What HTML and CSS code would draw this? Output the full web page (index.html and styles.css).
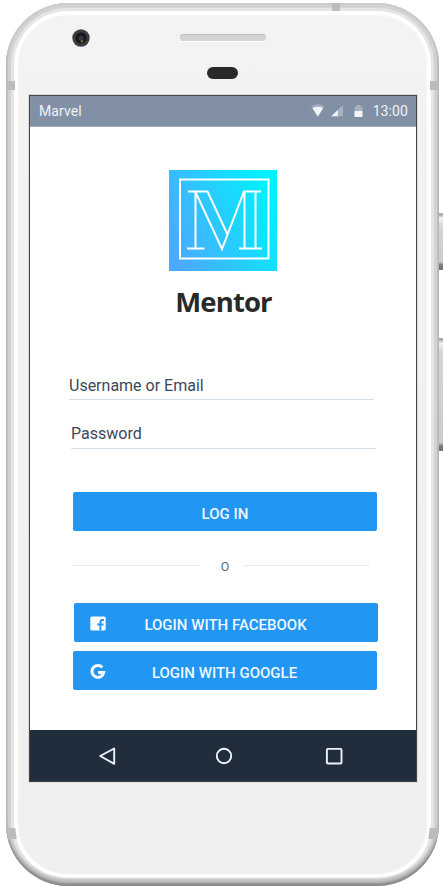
FILE: index.html
```html
<!DOCTYPE html>
<html lang="en">
<head>
<meta charset="utf-8">
<title>Mentor</title>
<link rel="stylesheet" href="styles.css">
</head>
<body>
<div class="phone">
  <i class="key power"></i><i class="key volume"></i>
  <i class="seam seam-top"></i><i class="seam seam-tl"></i><i class="seam seam-tr"></i><i class="seam seam-bl"></i><i class="seam seam-br"></i>
  <div class="forehead">
    <div class="optics">
      <svg class="camera" width="18" height="18" viewBox="0 0 18 18"><circle cx="9" cy="9" r="8.7" fill="#3b3d3f"/><circle cx="9" cy="9" r="5.6" fill="#17191c"/><circle cx="9" cy="9.3" r="2.6" fill="#30354a"/><circle cx="10" cy="12.2" r="1.3" fill="#64702f"/></svg>
      <div class="speaker"></div>
    </div>
    <div class="sensor"></div>
  </div>
  <div class="screen">
    <header class="status">
      <span class="carrier">Marvel</span>
      <svg class="signals" width="54" height="16" viewBox="0 0 54 16">
        <path d="M0 3.2Q6.8-.8 13.6 3.2L6.8 14z" fill="#fff" opacity=".25"/><path d="M1.500 5Q6.8 2.500 12.100 5L6.8 13.5z" fill="#f3f5f8"/>
        <path d="M32 2v11.300H20.300z" fill="#fff" opacity=".3"/><path d="M26.800 7v6.300h-6.500z" fill="#f3f5f8"/>
        <path d="M43.500 3.500h2V2h4v1.500h2V8h-8z" fill="#fff" opacity=".3"/><path d="M43.500 8h8v5.200q0 .8-.8.8h-6.400q-.8 0-.8-.8z" fill="#f3f5f8"/>
      </svg>
      <span class="clock">13:00</span>
    </header>
    <main class="content">
      <svg class="logo" width="108" height="101" viewBox="0 0 108 101">
        <defs><linearGradient id="g" x1="0" y1=".7" x2="1" y2=".3"><stop offset="0" stop-color="#4ca9ff"/><stop offset="1" stop-color="#00f2ff"/></linearGradient></defs>
        <path fill="url(#g)" d="M0 0h108v101H0z"/>
        <g fill="none" stroke="#fff" stroke-width="2"><path d="M11 9.500h88.500v79H11z"/>
        <path d="M19 21.500h19.500l20 43M26.500 21.500v57M18 78.500h17.500M26.500 22l26.500 57 22-57.500H92M75.500 22v56.500M86.500 22v56.500M70 78.500h23"/></g>
      </svg>
      <h1>Mentor</h1>
      <form>
        <div class="field user">Username or Email</div>
        <div class="field pass">Password</div>
        <button type="button" class="login">LOG IN</button>
        <div class="divider"><span>O</span></div>
        <button type="button" class="social"><svg width="16" height="16" viewBox="0 0 16 16"><rect x=".3" y=".5" width="15.400" height="14" rx="1.500" fill="#f8fbff"/><path d="M10.400 14.500V6.500q0-2.500 2.300-2.500h1.300M7.300 8.500h6.200" fill="none" stroke="#2196f3" stroke-width="1.900"/></svg><span>LOGIN WITH FACEBOOK</span></button>
        <button type="button" class="social google"><svg width="16" height="16" viewBox="0 0 16 16"><path d="M12.300 3.500A5.900 5.900 0 1 0 13.700 8.500H8" fill="none" stroke="#f8fbff" stroke-width="3"/></svg><span>LOGIN WITH GOOGLE</span></button>
      </form>
    </main>
    <nav class="nav">
      <svg width="20" height="20" viewBox="0 0 20 20"><path d="M17.200 2.500v15.300L3.200 10z"/></svg>
      <svg class="home" width="20" height="20" viewBox="0 0 20 20"><circle cx="10" cy="10" r="7.200"/></svg>
      <svg width="20" height="20" viewBox="0 0 20 20"><rect x="2.900" y="2.900" width="14.600" height="14.600" rx="1"/></svg>
    </nav>
  </div>
</div>
</body>
</html>
```
FILE: styles.css
```css
* { box-sizing: border-box; }
html { overflow: hidden; }
body { margin: 0; height: 886px; overflow: hidden; background: #fff; font-family: Roboto, sans-serif; }
.phone {
  position: relative;
  width: 433px;
  height: 883px;
  margin: 3px 0 0 6px;
  border-radius: 62px;
  background: linear-gradient(#f3f3f3, #efefef);
  box-shadow:
    inset 0 2px 1px #cdcdcd,
    inset 0 -3px 2px #8c8c8c,
    inset 0 -7px 3px #bcbcbc,
    inset 0 0 0 2px #c6c6c6,
    inset 0 0 0 5px #d3d3d3,
    inset 0 0 0 8px #e5e5e5,
    inset 0 0 2px 12px #fff;
}
.forehead { height: 92px; padding-top: 26px; }
.optics { display: flex; align-items: center; gap: 90px; padding-left: 66px; }
.camera { display: block; }
.speaker { width: 86px; height: 7px; border-radius: 4px; background: #d4d4d4; box-shadow: inset 0 1px 1px #bcbcbc, 0 1px #fff; margin-top: -2px; }
.sensor { width: 31px; height: 12px; margin: 20px 0 0 201px; border-radius: 6px; background: #292929; }
.key { position: absolute; left: 433px; width: 4px; background: linear-gradient(#aaa 0 2px, #f2f2f2 5px, #d5d5d5 14px, #ccc calc(100% - 8px), #777 calc(100% - 5px)); }
.power { top: 210px; height: 57px; }
.volume { top: 335px; height: 113px; }
.seam { position: absolute; background: #bcbcbc; }
.seam-top { left: 326px; top: 0; width: 8px; height: 8px; }
.seam-tl, .seam-tr { top: 78px; width: 9px; height: 9px; }
.seam-tl { left: 0; }
.seam-tr { right: 0; }
.seam-bl, .seam-br { top: 825px; width: 9px; height: 11px; }
.seam-bl { left: 1px; transform: skewX(7deg); }
.seam-br { right: 1px; transform: skewX(-7deg); }
.screen {
  display: flex;
  flex-direction: column;
  width: 388px;
  height: 687px;
  margin-left: 23px;
  border: 1px solid #454545;
  outline: 1px solid #dcdcdc;
  background: #fff;
}
.status { display: flex; align-items: center; height: 31px; padding: 0 8px 0 9px; background: #8290a6; border-bottom: 1px solid #a1acbd; color: #f0f2f5; font-size: 14px; letter-spacing: .1px; }
.signals { margin: 0 8px 0 auto; }
.content { flex: 1; padding-top: 43px; }
.logo { display: block; margin-left: 139px; }
h1 { margin: 11px 0 0 1px; font: 700 27.500px/40px "Open Sans", sans-serif; text-align: center; color: #292929; letter-spacing: -.9px; }
form { padding: 50px 39px 0; }
.field { width: 305px; height: 28px; border-bottom: 1px solid #d5dfe7; color: #3a485a; font-size: 16px; line-height: 27px; }
.pass { margin: 21px 0 0 2px; line-height: 26px; }
button { display: block; width: 304px; height: 39px; padding: 0; border: 0; border-radius: 2px; background: #2196f3; color: #eef6ff; font: 500 15px/41px Roboto, sans-serif; }
.login { margin: 43px 0 0 4px; padding-top: 2px; }
.divider { display: flex; align-items: center; width: 297px; height: 20px; margin: 24px 0 0 4px; color: #626c79; font-size: 12.500px; }
.divider::before, .divider::after { content: ""; flex: 1; height: 1px; background: #ebebeb; }
.divider span { width: 45px; padding: 2px 0 0 7px; text-align: center; }
.social { display: grid; grid-template-columns: 16px 1fr; align-items: center; margin: 28px 0 0 5px; padding: 0 1px 0 16px; }
.social span { padding: 2px 32px 0 0; text-align: center; }
.social svg { margin-top: -1px; }
.google { margin: 9px 0 0 4px; }
.google svg { margin-left: 1px; }
.nav { display: flex; justify-content: space-between; align-items: center; height: 51px; padding: 0 72px 0 67px; background: #1f2d3d; }
.nav svg { fill: none; stroke: #eef2f6; stroke-width: 1.900; stroke-linejoin: round; }
.nav .home { margin-left: 6px; }
```
